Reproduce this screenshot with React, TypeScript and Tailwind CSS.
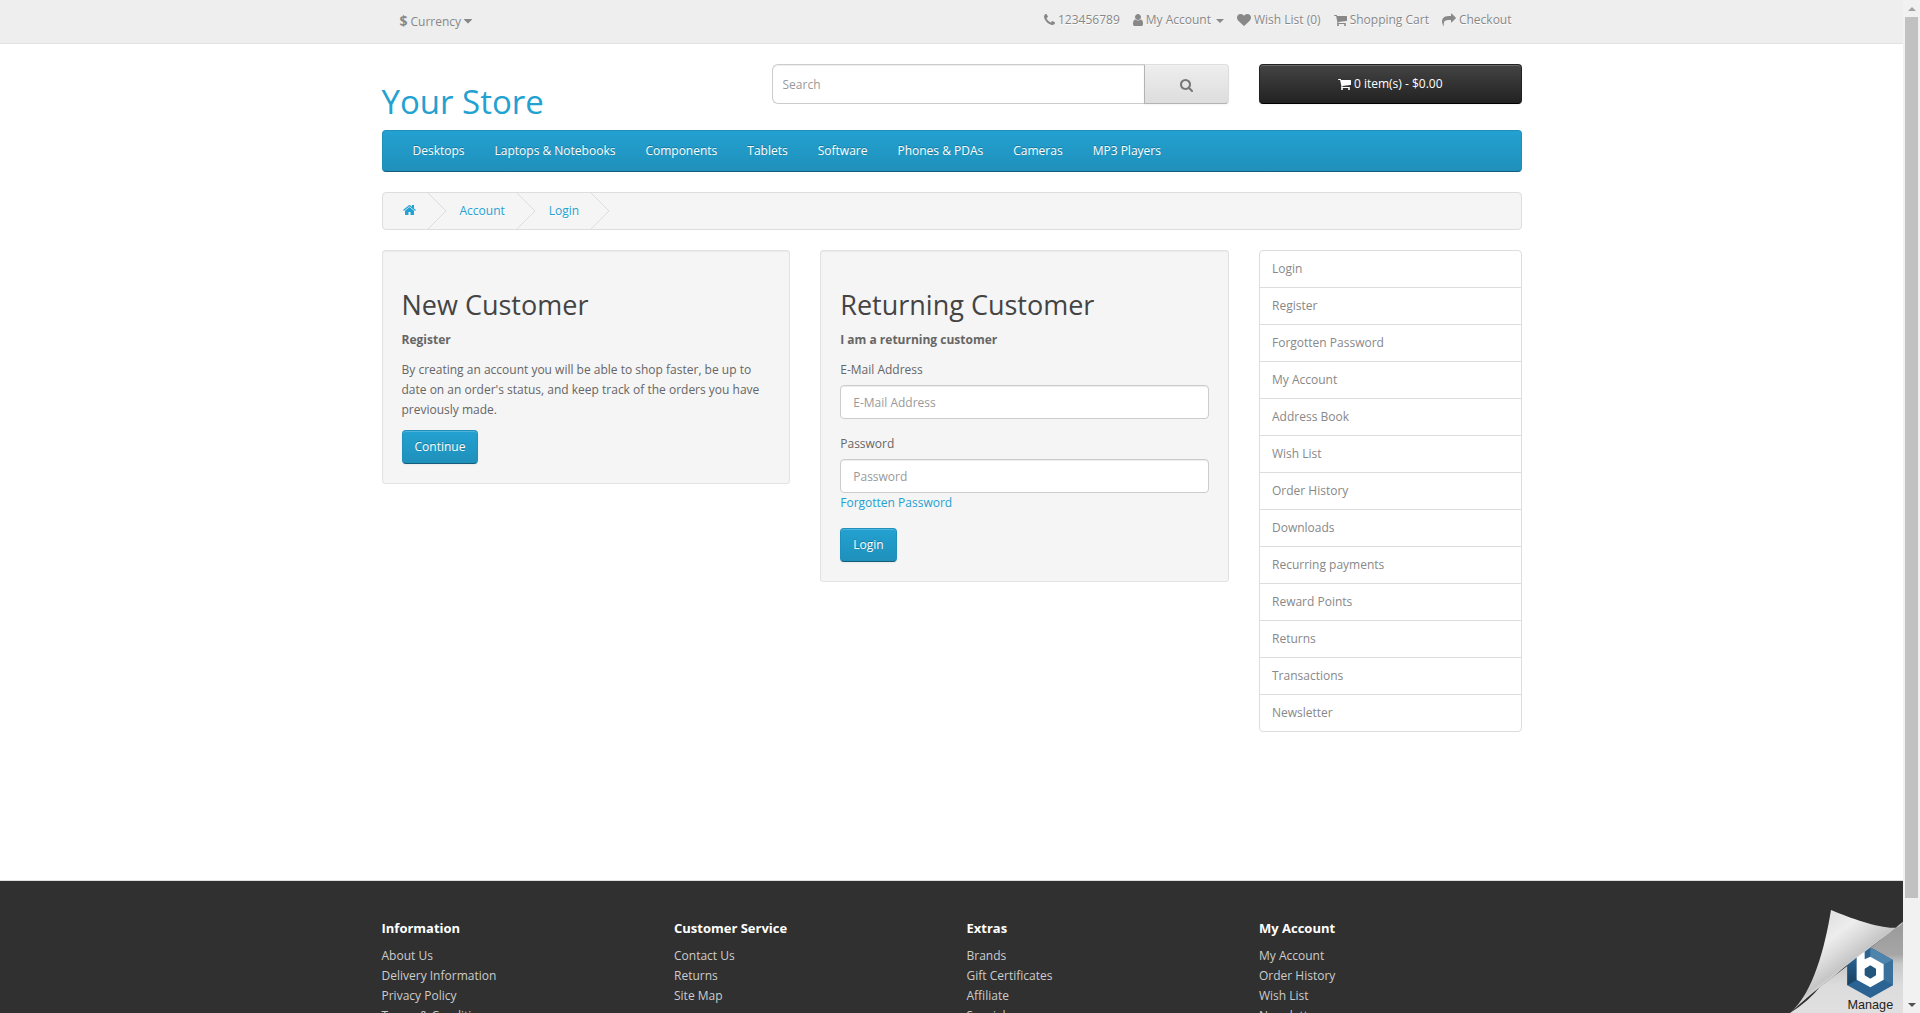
import React, { useId } from "react";

type IconProps = { box: string; d: string; className: string };

function Icon({ box, d, className }: IconProps) {
  return (
    <svg viewBox={box} className={`inline-block shrink-0 fill-current ${className}`} aria-hidden="true">
      <path d={d} />
    </svg>
  );
}

const CART =
  "M704 1536q0 52-38 90t-90 38-90-38-38-90 38-90 90-38 90 38 38 90zm896 0q0 52-38 90t-90 38-90-38-38-90 38-90 90-38 90 38 38 90zm128-1088v512q0 24-16.5 42.5t-40.5 21.5l-1044 122q13 60 13 70 0 16-24 64h920q26 0 45 19t19 45-19 45-45 19h-1024q-26 0-45-19t-19-45q0-11 8-31.5t16-36 21.5-40 15.5-29.5l-177-823h-204q-26 0-45-19t-19-45 19-45 45-19h256q16 0 28.5 6.5t19.5 15.5 13 24.5 8 26 5.5 29.5 4.5 26h1201q26 0 45 19t19 45z";

const PhoneIcon = () => (
  <Icon
    className="h-3.5 w-[11px]"
    box="192 0 1408 1792"
    d="M1600 1240q0 27-10 70.5t-21 68.5q-21 50-122 106-94 51-186 51-27 0-53-3.5t-57.5-12.5-47-14.5-55.5-20.5-49-18q-98-35-175-83-127-79-264-216t-216-264q-48-77-83-175-3-9-18-49t-20.5-55.5-14.5-47-12.5-57.5-3.5-53q0-92 51-186 56-101 106-122 25-11 68.5-21t70.5-10q14 0 21 3 18 6 53 76 11 19 30 54t35 63.5 31 53.5q3 4 17.5 25t21.5 35.5 7 28.5q0 20-28.5 50t-62 55-62 53-28.5 46q0 9 5 22.5t8.5 20.5 14 24 11.5 19q76 137 174 235t235 174q2 1 19 11.5t24 14 20.5 8.5 22.5 5q18 0 46-28.5t53-62 55-62 50-28.5q14 0 28.5 7t35.5 21.5 25 17.5q25 15 53.5 31t63.5 35 54 30q70 35 76 53 3 7 3 21z"
  />
);

const UserIcon = () => (
  <Icon
    className="h-3.5 w-2.5"
    box="256 0 1280 1792"
    d="M1536 1399q0 109-62.5 187t-150.5 78h-854q-88 0-150.5-78t-62.5-187q0-85 8.5-160.5t31.5-152 58.5-131 94-89 134.5-34.5q131 128 313 128t313-128q76 0 134.5 34.5t94 89 58.5 131 31.5 152 8.5 160.5zm-256-887q0 159-112.5 271.5t-271.5 112.5-271.5-112.5-112.5-271.5 112.5-271.5 271.5-112.5 271.5 112.5 112.5 271.5z"
  />
);

const HeartIcon = () => (
  <Icon
    className="h-3.5 w-3.5"
    box="0 0 1792 1792"
    d="M896 1664q-26 0-44-18l-624-602q-10-8-27.5-26t-55.5-65.5-68-97.5-53.5-121-23.5-138q0-220 127-344t351-124q62 0 126.5 21.5t120 58 95.5 68.5 76 68q36-36 76-68t95.5-68.5 120-58 126.5-21.5q224 0 351 124t127 344q0 221-229 450l-623 600q-18 18-44 18z"
  />
);

const CartIcon = () => <Icon className="h-3.5 w-[13px]" box="64 0 1664 1792" d={CART} />;

const ShareIcon = () => (
  <Icon
    className="h-3.5 w-3.5"
    box="0 0 1792 1792"
    d="M1792 640q0 26-19 45l-512 512q-19 19-45 19t-45-19-19-45v-256h-224q-98 0-175.5 6t-154 21.5-133 42.5-105.5 69.5-80 101-48.5 138.5-17.5 181q0 55 5 123 0 6 2.5 23.5t2.5 26.5q0 15-8.5 25t-23.5 10q-16 0-28-17-7-9-13-22t-13.5-30-10.5-24q-127-285-127-451 0-199 53-333 162-403 875-403h224v-256q0-26 19-45t45-19 45 19l512 512q19 19 19 45z"
  />
);

const SearchIcon = () => (
  <Icon
    className="h-3.5 w-[13px] overflow-visible"
    box="64 0 1664 1792"
    d="M1216 832q0-185-131.5-316.5t-316.5-131.5-316.5 131.5-131.5 316.5 131.5 316.5 316.5 131.5 316.5-131.5 131.5-316.5zm512 832q0 52-38 90t-90 38q-54 0-90-38l-343-342q-179 124-399 124-143 0-273.5-55.5t-225-150-150-225-55.5-273.5 55.5-273.5 150-225 225-150 273.5-55.5 273.5 55.5 225 150 150 225 55.5 273.5q0 220-124 399l343 343q37 37 37 90z"
  />
);

const HomeIcon = () => (
  <Icon
    className="h-3.5 w-[13px]"
    box="64 0 1664 1792"
    d="M1472 992v480q0 26-19 45t-45 19h-384v-384h-256v384h-384q-26 0-45-19t-19-45v-480q0-1 .5-3t.5-3l575-474 575 474q1 2 1 6zm223-69l-62 74q-8 9-21 11h-3q-13 0-21-7l-692-577-692 577q-12 8-24 7-13-2-21-11l-62-74q-8-10-7-23.5t11-21.5l719-599q32-26 76-26t76 26l244 204v-195q0-14 9-23t23-9h192q14 0 23 9t9 23v408l219 182q10 8 11 21.5t-7 23.5z"
  />
);

const CaretIcon = () => (
  <Icon
    className="h-3.5 w-2"
    box="384 0 1024 1792"
    d="M1408 704q0 26-19 45l-448 448q-19 19-45 19t-45-19l-448-448q-19-19-19-45t19-45 45-19h896q26 0 45 19t19 45z"
  />
);

const CONTAINER = "mx-auto w-full max-w-[1140px]";
const GRID = "grid grid-cols-12 gap-x-[30px]";
const WELL =
  "rounded-[3px] border border-[#e3e3e3] bg-[#f5f5f5] p-[19px] shadow-[inset_0_1px_1px_rgba(0,0,0,0.05)]";
const PRIMARY =
  "inline-block rounded-[4px] border border-[#1f90bb] border-b-[#145e7a] bg-linear-to-b from-[#23a1d1] to-[#1f90bb] px-3 py-1.5 text-white [text-shadow:0_-1px_0_rgba(0,0,0,0.25)] shadow-[inset_0_1px_0_rgba(255,255,255,0.2),0_1px_2px_rgba(0,0,0,0.05)]";
const INPUT =
  "block h-[34px] w-full rounded-[4px] border border-[#ccc] bg-white px-3 text-[#555] placeholder:text-[#999] shadow-[inset_0_1px_1px_rgba(0,0,0,0.075)] outline-none";

const categories = [
  "Desktops",
  "Laptops & Notebooks",
  "Components",
  "Tablets",
  "Software",
  "Phones & PDAs",
  "Cameras",
  "MP3 Players",
];

const accountLinks = [
  "Login",
  "Register",
  "Forgotten Password",
  "My Account",
  "Address Book",
  "Wish List",
  "Order History",
  "Downloads",
  "Recurring payments",
  "Reward Points",
  "Returns",
  "Transactions",
  "Newsletter",
];

const footerColumns = [
  { title: "Information", links: ["About Us", "Delivery Information", "Privacy Policy", "Terms & Conditions"] },
  { title: "Customer Service", links: ["Contact Us", "Returns", "Site Map"] },
  { title: "Extras", links: ["Brands", "Gift Certificates", "Affiliate", "Specials"] },
  { title: "My Account", links: ["My Account", "Order History", "Wish List", "Newsletter"] },
];

function TopBar() {
  const link = "flex items-center gap-[3px]";
  return (
    <nav className="border-b border-[#e2e2e2] bg-[#eee] text-[#888] [text-shadow:0_1px_0_#fff]">
      <div className={`${CONTAINER} flex h-[43px] items-start justify-between`}>
        <button type="button" className="mt-3 ml-[18px] flex items-start gap-[3px]">
          <strong className="text-sm leading-[18px]">$</strong>
          <span>Currency</span>
          <span className="flex pt-0.5">
            <CaretIcon />
          </span>
        </button>
        <ul className="mt-2.5 mr-[10px] flex gap-[13px]">
          <li>
            <a href="#contact" className={link}>
              <PhoneIcon />
              <span>123456789</span>
            </a>
          </li>
          <li>
            <a href="#account" className={link}>
              <UserIcon />
              <span>My Account</span>
              <span className="mt-0.5 ml-0.5 border-x-4 border-t-4 border-x-transparent border-t-[#888]" />
            </a>
          </li>
          <li>
            <a href="#wishlist" className={link}>
              <HeartIcon />
              <span>Wish List (0)</span>
            </a>
          </li>
          <li>
            <a href="#cart" className={link}>
              <CartIcon />
              <span>Shopping Cart</span>
            </a>
          </li>
          <li>
            <a href="#checkout" className={link}>
              <ShareIcon />
              <span>Checkout</span>
            </a>
          </li>
        </ul>
      </div>
    </nav>
  );
}

function Header() {
  return (
    <header className={`${CONTAINER} ${GRID} pt-5 pb-[26px]`}>
      <h1 className="col-span-4 mt-5 h-5 text-[33px] leading-9 text-[#23a1d1]">
        <a href="#home">Your Store</a>
      </h1>
      <form className="col-span-5 flex h-10" onSubmit={(e) => e.preventDefault()}>
        <input
          type="text"
          aria-label="Search"
          placeholder="Search"
          className="min-w-0 flex-1 rounded-l-[6px] border border-r-0 border-[#ccc] bg-white px-2.5 pt-0.5 text-[#555] shadow-[inset_0_1px_1px_rgba(0,0,0,0.075)] outline-none placeholder:text-[#999]"
        />
        <button
          type="submit"
          aria-label="Search"
          className="flex items-center justify-center rounded-r-[4px] border border-[#ddd] border-b-[#b3b3b3] border-l-[#b3b3b3] bg-linear-to-b from-[#eee] to-[#ddd] px-[35px] pt-0.5 text-[#777] shadow-[inset_0_1px_0_rgba(255,255,255,0.2),0_1px_2px_rgba(0,0,0,0.05)]"
        >
          <SearchIcon />
        </button>
      </form>
      <button
        type="button"
        className="col-span-3 flex h-10 items-center justify-center gap-[3px] rounded-[4px] border border-[#222] border-b-black bg-linear-to-b from-[#444] to-[#222] text-white shadow-[inset_0_1px_0_rgba(255,255,255,0.2),0_1px_2px_rgba(0,0,0,0.05)]"
      >
        <CartIcon />
        <span>0 item(s) - $0.00</span>
      </button>
    </header>
  );
}

function Menu() {
  return (
    <nav
      className={`${CONTAINER} rounded-[4px] border border-[#1f90bb] border-b-[#145e7a] bg-linear-to-b from-[#23a1d1] to-[#1f90bb] px-[15px] text-white [text-shadow:0_-1px_0_rgba(0,0,0,0.25)]`}
    >
      <ul className="flex">
        {categories.map((c) => (
          <li key={c}>
            <a href="#category" className="block px-[15px] py-2.5">
              {c}
            </a>
          </li>
        ))}
      </ul>
    </nav>
  );
}

function Chevron() {
  return (
    <svg viewBox="0 0 19 36" className="mr-[13px] ml-3 h-9 w-[19px] shrink-0" aria-hidden="true">
      <path d="M0 0 L18 18 L0 36" fill="none" stroke="#ddd" />
    </svg>
  );
}

function Breadcrumb() {
  return (
    <ol
      className={`${CONTAINER} my-5 flex items-center rounded-[4px] border border-[#ddd] bg-[#f5f5f5] pl-5 text-[#23a1d1] [text-shadow:0_1px_0_#fff]`}
    >
      <li className="flex items-center">
        <a href="#home" aria-label="Home" className="flex pb-0.5">
          <HomeIcon />
        </a>
        <Chevron />
      </li>
      <li className="flex items-center">
        <a href="#account">Account</a>
        <Chevron />
      </li>
      <li className="flex items-center">
        <a href="#login">Login</a>
        <Chevron />
      </li>
    </ol>
  );
}

function NewCustomer() {
  return (
    <section className={WELL}>
      <h2 className="mt-5 mb-2.5 text-[27px] leading-[30px] text-[#444]">New Customer</h2>
      <p className="mb-2.5 font-bold">Register</p>
      <p className="mb-2.5">
        By creating an account you will be able to shop faster, be up to date on an order's status, and keep track of
        the orders you have previously made.
      </p>
      <a href="#register" className={PRIMARY}>
        Continue
      </a>
    </section>
  );
}

function ReturningCustomer() {
  const id = useId();
  return (
    <section className={WELL}>
      <h2 className="mt-5 mb-2.5 text-[27px] leading-[30px] text-[#444]">Returning Customer</h2>
      <p className="mb-2.5 font-bold">I am a returning customer</p>
      <form onSubmit={(e) => e.preventDefault()}>
        <div className="mb-[15px]">
          <label htmlFor={`${id}-email`} className="mb-[5px] block">
            E-Mail Address
          </label>
          <input id={`${id}-email`} type="text" placeholder="E-Mail Address" className={INPUT} />
        </div>
        <div className="mb-[15px]">
          <label htmlFor={`${id}-password`} className="mb-[5px] block">
            Password
          </label>
          <input id={`${id}-password`} type="password" placeholder="Password" className={INPUT} />
          <a href="#forgotten" className="block text-[#23a1d1]">
            Forgotten Password
          </a>
        </div>
        <button type="submit" className={PRIMARY}>
          Login
        </button>
      </form>
    </section>
  );
}

function AccountMenu() {
  return (
    <aside className="col-span-3">
      <ul className="divide-y divide-[#ddd] rounded-[4px] border border-[#ddd] text-[#888]">
        {accountLinks.map((l) => (
          <li key={l}>
            <a href="#account" className="block px-3 py-2">
              {l}
            </a>
          </li>
        ))}
      </ul>
    </aside>
  );
}

function Footer() {
  return (
    <footer className="mt-[148px] border-t border-[#ddd] bg-[#303030] pt-[30px] pb-10 text-[#ccc]">
      <div className={`${CONTAINER} grid grid-cols-4 gap-x-[30px]`}>
        {footerColumns.map((col) => (
          <div key={col.title}>
            <h5 className="mt-2.5 mb-[11px] text-[13px] leading-[14px] font-bold text-white">{col.title}</h5>
            <ul>
              {col.links.map((l) => (
                <li key={l}>
                  <a href="#info">{l}</a>
                </li>
              ))}
            </ul>
          </div>
        ))}
      </div>
    </footer>
  );
}

function ManageCorner() {
  return (
    <a href="#manage" className="absolute right-0 bottom-0 block" aria-label="Manage">
      <svg viewBox="90 120 339 309" className="h-[103px] w-[113px]">
        <defs>
          <linearGradient id="under" x1="0" y1="0" x2="0" y2="1">
            <stop offset="0" stopColor="#999" />
            <stop offset="0.36" stopColor="#a6a6a6" />
            <stop offset="0.46" stopColor="#c8c8c8" />
            <stop offset="0.7" stopColor="#dcdcdc" />
            <stop offset="1" stopColor="#e0e0e0" />
          </linearGradient>
          <linearGradient id="fold" gradientUnits="userSpaceOnUse" x1="185" y1="170" x2="275" y2="290">
            <stop offset="0" stopColor="#e4e4e4" />
            <stop offset="0.3" stopColor="#ededed" />
            <stop offset="0.6" stopColor="#dadada" />
            <stop offset="0.88" stopColor="#c6c6c6" />
            <stop offset="1" stopColor="#dedede" />
          </linearGradient>
          <linearGradient id="hexLeft" x1="0" y1="0" x2="0" y2="1">
            <stop offset="0" stopColor="#2a6594" />
            <stop offset="1" stopColor="#17405f" />
          </linearGradient>
        </defs>
        <path d="M429 155 L429 429 L90 429 Q150 390 180 350 Q300 260 429 155z" fill="url(#under)" />
        <path d="M331 232 L399 270 L399 346 L331 384 L262 346 L262 270z" fill="#2b6393" />
        <path d="M262 270 L290 256 L290 330 L262 346z" fill="url(#hexLeft)" />
        <path d="M331 232 L399 270 L371 284 L331 262z" fill="#4f84ac" />
        <path d="M399 270 L399 346 L371 329 L371 284z" fill="#3a719c" />
        <path d="M290 248 L314 240 L314 268 L331 260 L371 283 L371 329 L331 352 L290 329z" fill="#fff" />
        <path d="M331 286 L348 296 L348 316 L331 326 L314 316 L314 296z" fill="#24557d" />
        <path
          d="M213 120 C250 136 340 170 390 173 Q422 176 429 155 C380 200 290 258 220 320 Q150 372 90 429 C160 370 195 230 213 120z"
          fill="url(#fold)"
        />
        <text x="331" y="416" textAnchor="middle" fontSize="38" fill="#222" fontFamily="Liberation Sans, sans-serif">
          Manage
        </text>
      </svg>
    </a>
  );
}

function ScrollRail() {
  return (
    <div className="flex w-[17px] shrink-0 flex-col items-center bg-[#f1f1f1]" aria-hidden="true">
      <div className="flex h-[17px] items-center">
        <span className="border-x-4 border-b-4 border-x-transparent border-b-[#a3a3a3]" />
      </div>
      <div className="flex w-[13px] flex-1 flex-col">
        <div className="h-[90%] bg-[#c1c1c1]" />
      </div>
      <div className="flex h-[17px] items-center">
        <span className="border-x-4 border-t-4 border-x-transparent border-t-[#505050]" />
      </div>
    </div>
  );
}

export default function App() {
  return (
    <div className="flex h-screen overflow-hidden bg-white font-['Open_Sans',sans-serif] text-xs leading-5 text-[#666]">
      <div className="relative min-w-0 flex-1 overflow-hidden">
        <TopBar />
        <Header />
        <Menu />
        <Breadcrumb />
        <main className={`${CONTAINER} ${GRID}`}>
          <div className="col-span-9 grid grid-cols-2 items-start gap-x-[30px]">
            <NewCustomer />
            <ReturningCustomer />
          </div>
          <AccountMenu />
        </main>
        <Footer />
        <ManageCorner />
      </div>
      <ScrollRail />
    </div>
  );
}
